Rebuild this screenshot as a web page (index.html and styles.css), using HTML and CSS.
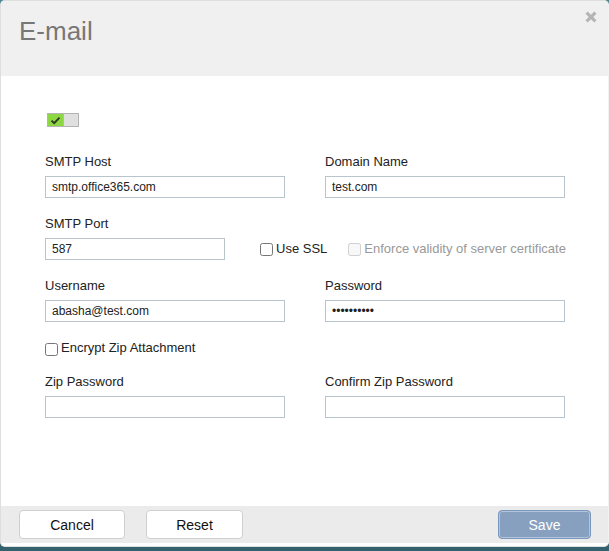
FILE: index.html
```html
<!DOCTYPE html>
<html>
<head>
<meta charset="utf-8">
<link rel="stylesheet" href="styles.css">
</head>
<body>
<div class="dialog">
  <div class="header">
    <h1 class="title">E-mail</h1>
    <span class="close" aria-label="Close">
      <svg width="12" height="12" viewBox="0 0 12 12"><path d="M1.6 1.6L10.4 10.4M10.4 1.6L1.6 10.4" stroke="#b5b5b5" stroke-width="3.2" fill="none"/></svg>
    </span>
  </div>
  <div class="body">
    <div class="toggle">
      <span class="toggle-on"><svg width="11" height="9" viewBox="0 0 11 9"><path d="M1.5 4.6L4.2 7.2L9.5 1.6" stroke="#2f3a2a" stroke-width="2" fill="none"/></svg></span>
      <span class="toggle-off"></span>
    </div>
    <div class="row">
      <div class="field">
        <label class="label">SMTP Host</label>
        <input class="input" type="text" value="smtp.office365.com">
      </div>
      <div class="field">
        <label class="label">Domain Name</label>
        <input class="input" type="text" value="test.com">
      </div>
    </div>
    <div class="field">
      <label class="label">SMTP Port</label>
      <div class="port-line">
        <input class="input port" type="text" value="587">
        <label class="check ssl"><input type="checkbox" class="cb">Use SSL</label>
        <label class="check enforce disabled"><input type="checkbox" class="cb" disabled>Enforce validity of server certificate</label>
      </div>
    </div>
    <div class="row">
      <div class="field">
        <label class="label">Username</label>
        <input class="input" type="text" value="abasha@test.com">
      </div>
      <div class="field">
        <label class="label">Password</label>
        <input class="input" type="password" value="abcdefghij">
      </div>
    </div>
    <label class="check encrypt"><input type="checkbox" class="cb">Encrypt Zip Attachment</label>
    <div class="row">
      <div class="field">
        <label class="label">Zip Password</label>
        <input class="input" type="password" value="">
      </div>
      <div class="field">
        <label class="label">Confirm Zip Password</label>
        <input class="input" type="password" value="">
      </div>
    </div>
  </div>
  <div class="footer">
    <button class="btn cancel">Cancel</button>
    <button class="btn reset">Reset</button>
    <span class="spacer"></span>
    <button class="btn save">Save</button>
  </div>
</div>
</body>
</html>
```

FILE: styles.css
```css
html {
  background: linear-gradient(#4d8593, #33616d);
  height: 100%;
}
body {
  margin: 0;
  font-family: "Liberation Sans", Arial, sans-serif;
  color: #222;
}
.dialog {
  box-sizing: border-box;
  width: 609px;
  height: 547px;
  background: #fff;
  border: 1px solid #dedede;
  border-right-color: #f2f2f2;
  border-radius: 5px;
  display: flex;
  flex-direction: column;
  padding-bottom: 3px;
  position: relative;
  overflow: hidden;
}
.header {
  height: 75px;
  flex: none;
  background: #f0f0f0;
  box-sizing: border-box;
  padding: 15px 0 0 18px;
}
.title {
  margin: 0;
  font-weight: normal;
  font-size: 26px;
  line-height: 30px;
  color: #777;
}
.close {
  position: absolute;
  top: 10px;
  right: 11px;
  width: 12px;
  height: 12px;
  display: block;
}
.close svg { display: block; }
.body {
  flex: 1;
  display: flex;
  flex-direction: column;
  gap: 18px;
  padding: 37px 0 0 44px;
}
.toggle {
  display: flex;
  width: 32px;
  height: 14px;
  box-sizing: border-box;
  border: 1px solid #b4b4b4;
  margin-left: 2px;
  margin-bottom: 9px;
}
.toggle-on {
  width: 15px;
  background: #8cd742;
  display: flex;
  align-items: center;
  justify-content: center;
}
.toggle-on svg { display: block; }
.toggle-off {
  flex: 1;
  background: #e0e0e0;
  border-left: 1px solid #b8b8b8;
}
.row {
  display: flex;
  gap: 40px;
}
.field {
  display: flex;
  flex-direction: column;
  width: 240px;
}
.label {
  font-size: 13px;
  line-height: 16px;
  margin-bottom: 6px;
  color: #222;
}
.input {
  box-sizing: border-box;
  width: 240px;
  height: 22px;
  margin: 0;
  border: 1px solid #b8c5cc;
  border-radius: 0;
  padding: 0 6px;
  font-family: "Liberation Sans", Arial, sans-serif;
  font-size: 12px;
  color: #222;
  background: #fff;
  outline: none;
}
.port-line {
  display: flex;
  align-items: center;
  width: 540px;
}
.input.port {
  width: 180px;
}
.check {
  display: flex;
  align-items: center;
  font-size: 13px;
  line-height: 16px;
  color: #222;
  white-space: nowrap;
}
.cb {
  width: 13px;
  height: 13px;
  margin: 0 3px 0 0;
}
.ssl {
  margin-left: 35px;
}
.enforce {
  margin-left: 21px;
}
.disabled {
  color: #999;
}
.encrypt {
  align-items: flex-start;
  align-self: flex-start;
}
.encrypt .cb {
  margin-top: 3px;
}
.footer {
  flex: none;
  height: 37px;
  box-sizing: border-box;
  background: #ebebeb;
  display: flex;
  align-items: center;
  padding: 0 17px 0 18px;
}
.btn {
  height: 29px;
  box-sizing: border-box;
  font-family: "Liberation Sans", Arial, sans-serif;
  font-size: 14px;
  color: #111;
  background: #fff;
  border: 1px solid #cfcfcf;
  border-radius: 4px;
  padding: 0;
}
.cancel { width: 106px; }
.reset { width: 97px; margin-left: 21px; }
.spacer { flex: 1; }
.save {
  width: 93px;
  background: #87a0bf;
  color: #fff;
  border: 1px solid #7a97bd;
  box-shadow: inset 0 0 0 1px #b3c4db;
}
```
